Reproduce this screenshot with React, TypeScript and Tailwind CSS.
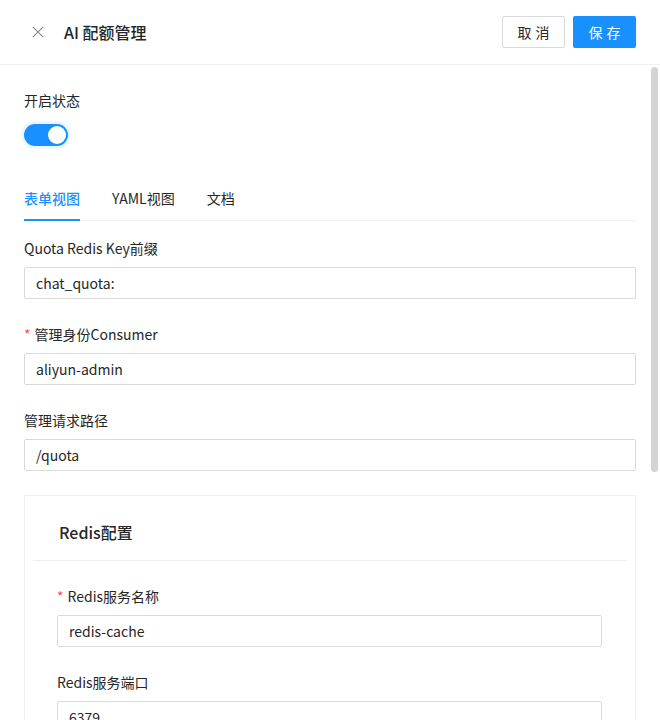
import React, { useState } from 'react';

const font = "font-['Noto_Sans_CJK_SC',sans-serif]";

interface FieldProps {
    label: string;
    value: string;
    required?: boolean;
    last?: boolean;
}

const Field: React.FC<FieldProps> = ({ label, value, required, last }) => (
    <div className={last ? '' : 'mb-6'}>
        <div className="pb-2 h-[30px] flex items-center text-sm leading-[22px] text-[#262626]">
            {required && <span className="text-[#ff4d4f] mr-1">*</span>}
            {label}
        </div>
        <input
            readOnly
            value={value}
            className="w-full h-8 px-[11px] border border-[#d9d9d9] rounded-[2px] text-sm text-[#262626] outline-none bg-white"
        />
    </div>
);

export default function App() {
    const [enabled, setEnabled] = useState(true);
    const [tab, setTab] = useState(0);
    const tabs = ['表单视图', 'YAML视图', '文档'];

    return (
        <div className={`${font} w-[660px] h-[720px] bg-white overflow-hidden relative`}>
            {/* header */}
            <div className="h-[65px] flex items-center px-6 border-b border-[#f0f0f0]">
                <button className="w-3 h-4 ml-2 mr-5 flex items-center justify-center text-[#8c8c8c]">
                    <svg width="12" height="12" viewBox="0 0 12 12" fill="none" stroke="currentColor" strokeWidth="1.2">
                        <path d="M0.8 0.8 11.2 11.2M11.2 0.8 0.8 11.2" />
                    </svg>
                </button>
                <div className="flex-1 text-base leading-6 font-medium text-[#262626]">AI 配额管理</div>
                <button className="h-8 w-[63px] border border-[#d9d9d9] rounded-[2px] text-sm text-[#262626] tracking-[0.3em] pl-[0.3em] bg-white">
                    取消
                </button>
                <button className="h-8 w-[63px] ml-2 rounded-[2px] text-sm text-white bg-[#1890ff] tracking-[0.3em] pl-[0.3em]">
                    保存
                </button>
            </div>

            {/* scrollbar thumb */}
            <div className="absolute left-[651px] top-[67px] w-[7px] h-[405px] rounded-full bg-[#d4d4d4]" />

            <div className="px-6 pt-6">
                <div className="mb-6">
                    <div className="pb-2 h-[30px] flex items-center text-sm leading-[22px] text-[#262626]">开启状态</div>
                    <div className="h-8 flex items-center">
                        <button
                            onClick={() => setEnabled(!enabled)}
                            className={`w-11 h-[22px] rounded-full relative shadow-[0_0_0_3px_rgba(24,144,255,0.08)] ${enabled ? 'bg-[#1890ff]' : 'bg-[#bfbfbf]'}`}
                        >
                            <span className={`absolute top-[2px] w-[18px] h-[18px] rounded-full bg-white ${enabled ? 'left-6' : 'left-[2px]'}`} />
                        </button>
                    </div>
                </div>

                {/* tabs */}
                <div className="flex gap-8 border-b border-[#f0f0f0] mb-4 h-[46px]">
                    {tabs.map((t, i) => (
                        <button
                            key={t}
                            onClick={() => setTab(i)}
                            className={`pt-3 pb-[10px] h-[46px] text-sm leading-[22px] border-b-2 ${tab === i ? 'text-[#1890ff] font-medium border-[#1890ff]' : 'text-[#262626] border-transparent'}`}
                        >
                            {t}
                        </button>
                    ))}
                </div>

                <Field label="Quota Redis Key前缀" value="chat_quota:" />
                <Field label="管理身份Consumer" value="aliyun-admin" required />
                <Field label="管理请求路径" value="/quota" />

                {/* redis card */}
                <div className="border border-[#f0f0f0] p-2">
                    <div className="h-[57px] flex items-center px-[26px] border-b border-[#f0f0f0] text-base font-medium text-[#262626]">
                        Redis配置
                    </div>
                    <div className="p-6 pr-[25px]">
                        <Field label="Redis服务名称" value="redis-cache" required />
                        <Field label="Redis服务端口" value="6379" />
                        <Field label="Redis密码" value="" last />
                    </div>
                </div>
            </div>
        </div>
    );
}
